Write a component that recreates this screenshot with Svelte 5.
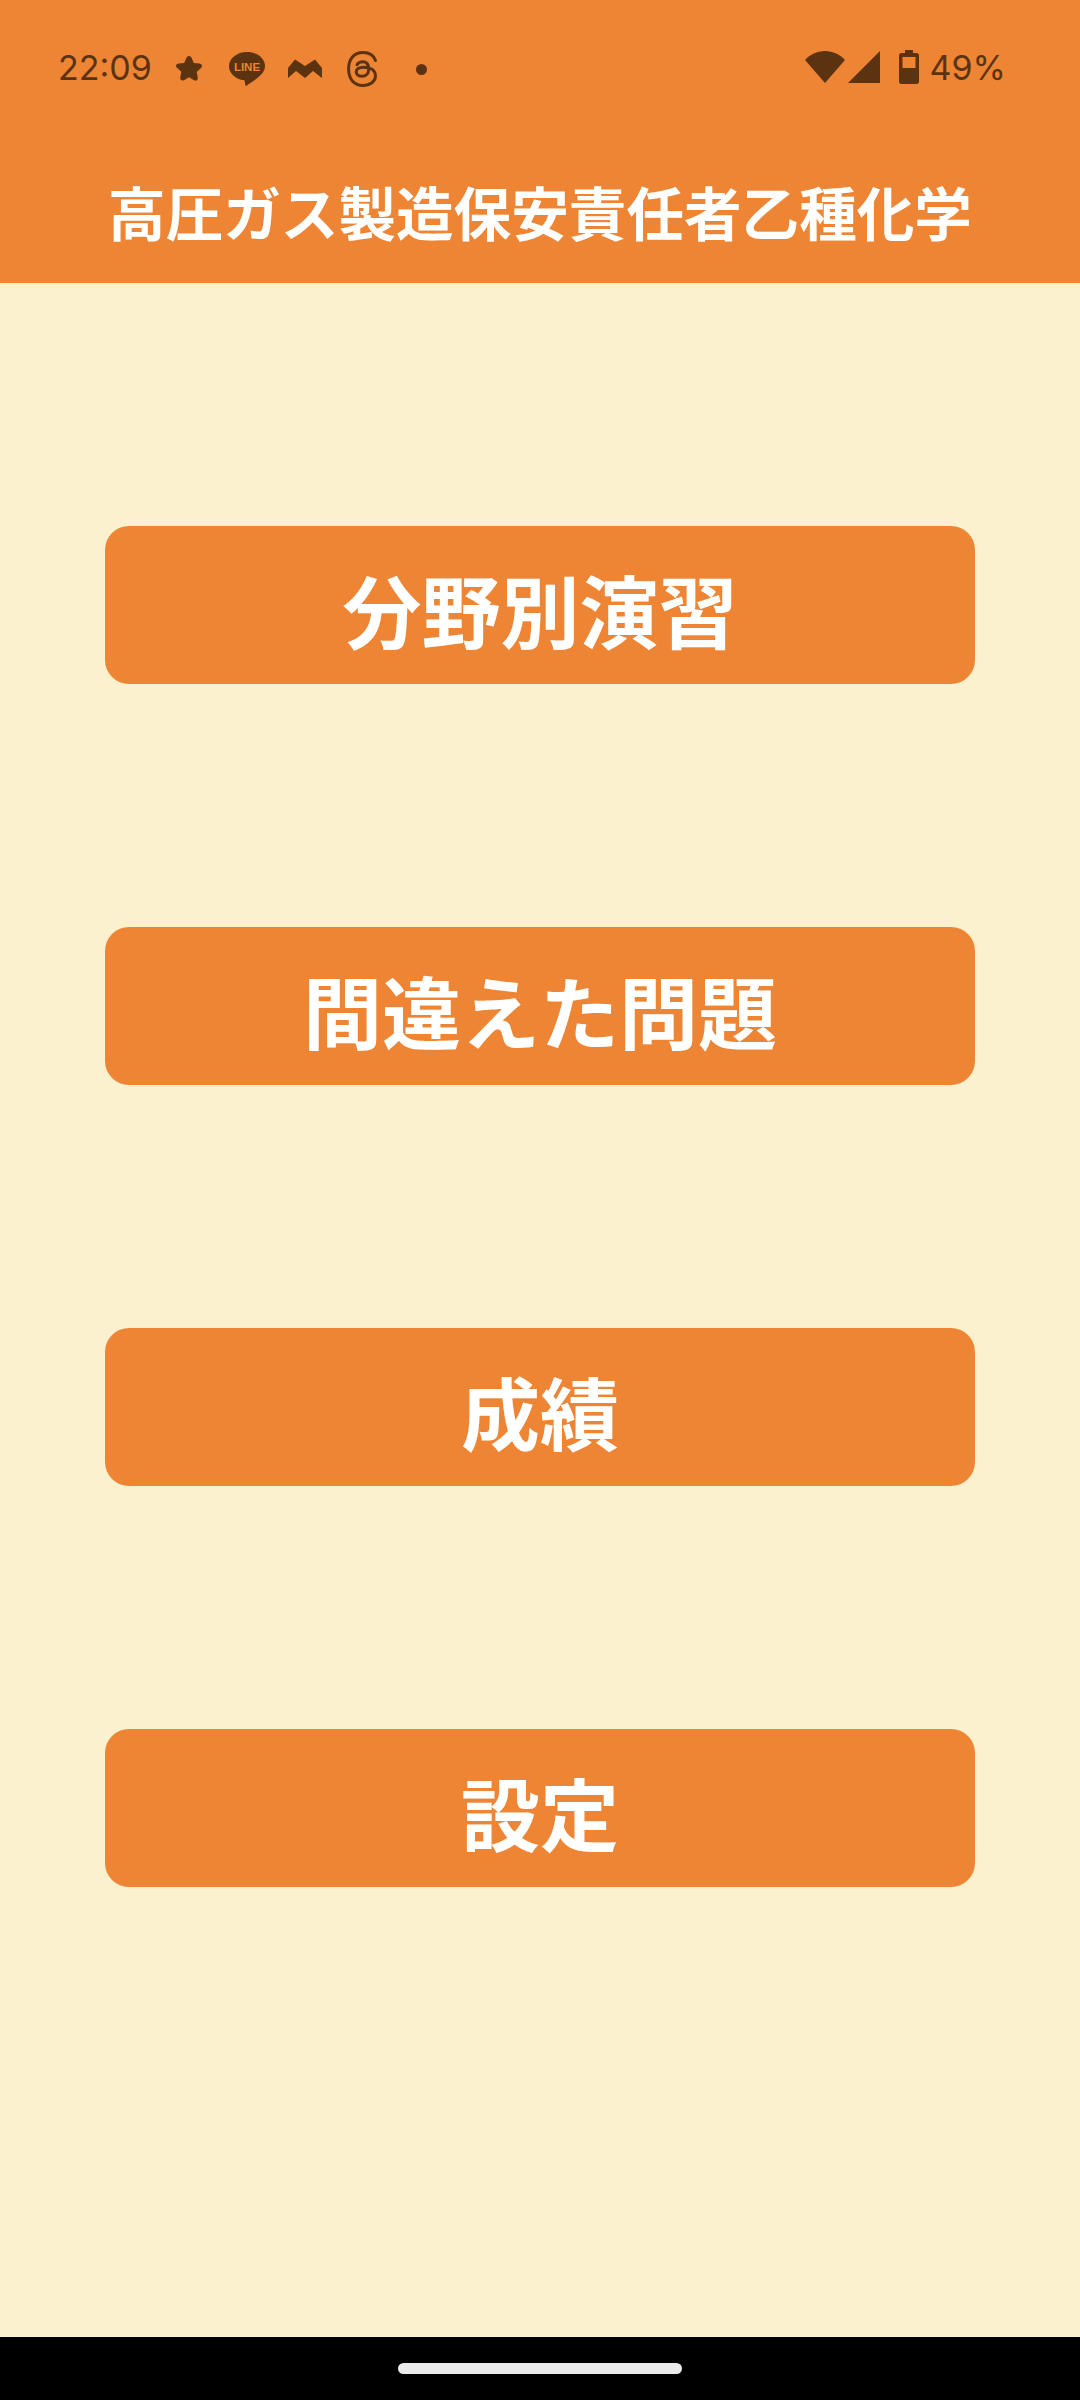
<script lang="ts">
  const menu = ["分野別演習", "間違えた問題", "成績", "設定"];
</script>

<div class="screen">
  <header class="app-header">
    <div class="status-bar">
      <div class="status-left">
        <span class="clock">22:09</span>
        <svg class="ic-star" viewBox="0 0 28 28" width="28" height="28">
          <path d="M14 1c1.500 0 2.300 1 2.800 2.200l2 4.800 5.400.6c1.500.2 2.800 1 2.800 2.400 0 .9-.5 1.600-1.300 2.300l-4 3.600 1 5.400c.3 1.800-.4 3.400-2 3.400-.7 0-1.300-.2-2-.6L14 22.200l-4.700 2.700c-.7.4-1.300.6-2 .6-1.600 0-2.300-1.600-2-3.400l1-5.400-4-3.600C1.500 12.400 1 11.700 1 10.800c0-1.400 1.300-2.200 2.800-2.400L9.200 8l2-4.800C11.700 2 12.500 1 14 1z" fill="#5b3311"/>
        </svg>
        <svg class="ic-line" viewBox="0 0 36 34" width="36" height="34">
          <path d="M18 0C8 0 0 6.300 0 14.200c0 7.200 6.500 13 15.400 14l1.100 5.300c.1.500.6.600 1 .3 3.200-2.200 9.500-6.200 13.300-10 3.300-2.800 5.200-6 5.200-9.600C36 6.300 28 0 18 0z" fill="#5b3311"/>
          <text x="18" y="19" text-anchor="middle" class="line-word">LINE</text>
        </svg>
        <svg class="ic-m" viewBox="0 0 34 20" width="34" height="20">
          <path d="M0 9 7 .5 17 7 27 .5 34 9v10l-9-7-8 7-9-7-8 7z" fill="#5b3311"/>
        </svg>
        <svg class="ic-threads" viewBox="0 0 31 36" width="31" height="36" fill="none" stroke="#5b3311" stroke-width="3" stroke-linecap="round">
          <path d="M28.500 9.500C26.500 4 22 1.600 16 1.600 7 1.600 1.600 8 1.600 18S7 34.400 16 34.400c7 0 12.500-4 12.500-9.400 0-6-5.500-8.800-12-8.800-4.600 0-7.300 2-7.300 4.600 0 2.700 2.400 4.500 5.600 4.500 4.500 0 6.900-3 6.900-7.400 0-4.600-2.400-7.100-6.100-7.100-2.600 0-4.400 1-5.600 2.900"/>
        </svg>
        <span class="dot"></span>
      </div>
      <div class="status-right">
        <svg class="ic-wifi" viewBox="0 0 40 32" width="40" height="32">
          <path d="M0 9C5 3.500 12 0 20 0s15 3.500 20 9L20 32z" fill="#5b3311"/>
        </svg>
        <svg class="ic-signal" viewBox="0 0 32 32" width="32" height="32">
          <path d="M32 0v32H0z" fill="#5b3311"/>
        </svg>
        <svg class="ic-battery" viewBox="0 0 20 34" width="20" height="34">
          <path d="M6 0h8v3h3.500c1.400 0 2.500 1.100 2.500 2.500v26c0 1.400-1.100 2.500-2.500 2.500h-15C1.100 34 0 32.900 0 31.500v-26C0 4.100 1.100 3 2.500 3H6z" fill="#5b3311"/>
          <rect x="3.500" y="7" width="13" height="11" fill="#ee8534"/>
        </svg>
        <span class="percent">49%</span>
      </div>
    </div>
    <h1 class="app-title">高圧ガス製造保安責任者乙種化学</h1>
  </header>

  <main class="menu">
    {#each menu as label}
      <button class="menu-btn">{label}</button>
    {/each}
  </main>

  <nav class="nav-bar">
    <span class="home-pill"></span>
  </nav>
</div>

<style>
  :global(body) {
    margin: 0;
    background: #fcf1cf;
  }
  .screen {
    width: 1080px;
    height: 2400px;
    display: flex;
    flex-direction: column;
    background: #fcf1cf;
    font-family: "Noto Sans CJK JP", "Noto Sans", sans-serif;
  }
  .app-header {
    height: 283px;
    flex-shrink: 0;
    background: #ee8534;
    display: flex;
    flex-direction: column;
  }
  .status-bar {
    height: 138px;
    flex-shrink: 0;
    display: flex;
    align-items: center;
    justify-content: space-between;
    padding: 0 74px 0 58px;
    color: #5b3311;
    font-family: Inter, "Noto Sans", sans-serif;
    font-size: 34px;
  }
  .status-left,
  .status-right {
    display: flex;
    align-items: center;
  }
  .status-right {
    margin-bottom: 4px;
  }
  .clock {
    width: 94px;
    margin-bottom: 3px;
    white-space: nowrap;
  }
  .ic-star {
    margin-left: 23px;
  }
  .ic-line {
    margin-left: 26px;
  }
  .line-word {
    fill: #ee8534;
    font-family: "Liberation Sans", sans-serif;
    font-size: 11.500px;
    font-weight: 700;
  }
  .ic-m {
    margin-left: 23px;
  }
  .ic-threads {
    margin-left: 25px;
  }
  .dot {
    width: 11px;
    height: 11px;
    margin-left: 38px;
    border-radius: 50%;
    background: #5b3311;
  }
  .ic-wifi {
    margin-right: 3px;
  }
  .ic-signal {
    margin-right: 19px;
  }
  .ic-battery {
    margin-right: 11px;
  }
  .app-title {
    margin: 33px 0 0;
    text-align: center;
    color: #fff;
    font-size: 57.600px;
    font-weight: 700;
    line-height: 80px;
    white-space: nowrap;
  }
  .menu {
    flex: 1;
    display: flex;
    flex-direction: column;
    gap: 243px;
    padding: 243px 105px 0;
  }
  .menu-btn {
    height: 158px;
    flex-shrink: 0;
    border: none;
    border-radius: 24px;
    background: #ee8534;
    color: #fff;
    font-family: inherit;
    font-size: 79px;
    font-weight: 700;
    padding: 6px 0 0;
    cursor: pointer;
  }
  .nav-bar {
    height: 63px;
    flex-shrink: 0;
    background: #000;
    display: flex;
    justify-content: center;
    padding-top: 26px;
    box-sizing: border-box;
  }
  .home-pill {
    width: 284px;
    height: 11px;
    border-radius: 6px;
    background: #ebebeb;
  }
</style>
